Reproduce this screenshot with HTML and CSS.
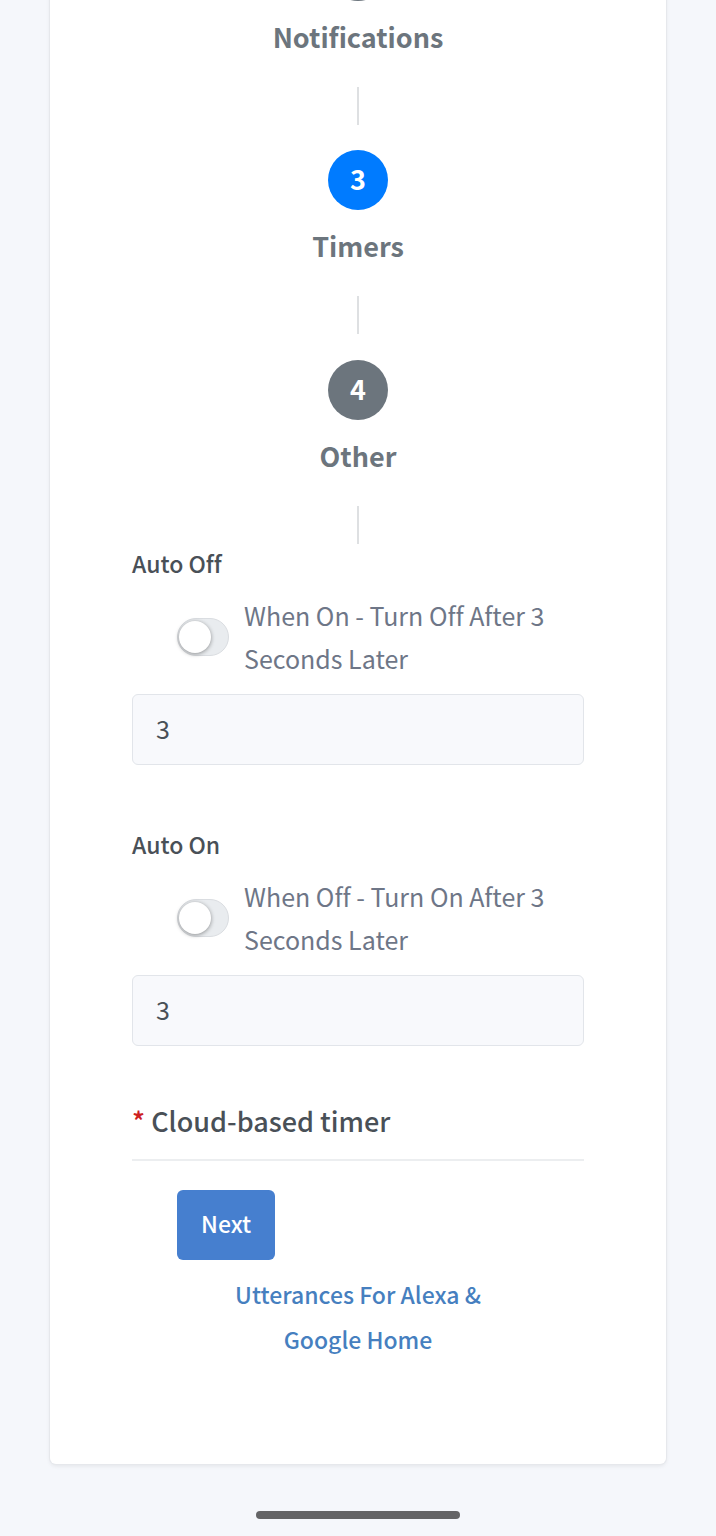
FILE: index.html
```html
<!DOCTYPE html>
<html lang="en">
<head>
  <meta charset="UTF-8" />
  <meta name="viewport" content="width=device-width, initial-scale=1.0"/>
  <title>Timers</title>
  <link rel="stylesheet" href="styles.css">
</head>
<body>

  <main class="card">
    <ol class="steps">
      <li class="step">
        <span class="step-number"></span>
        <span class="step-label">Notifications</span>
      </li>
      <li class="step">
        <span class="step-number active">3</span>
        <span class="step-label">Timers</span>
      </li>
      <li class="step">
        <span class="step-number">4</span>
        <span class="step-label">Other</span>
      </li>
    </ol>

    <form>
      <div class="timer">
        <label class="timer-title" for="autoOff">Auto Off</label>
        <label class="switch">
          <input type="checkbox" class="switch-input" />
          <span>When On - Turn Off After 3 Seconds Later</span>
        </label>
        <input type="text" inputmode="numeric" class="field" id="autoOff" value="3" />
      </div>

      <div class="timer">
        <label class="timer-title" for="autoOn">Auto On</label>
        <label class="switch">
          <input type="checkbox" class="switch-input" />
          <span>When Off - Turn On After 3 Seconds Later</span>
        </label>
        <input type="text" inputmode="numeric" class="field" id="autoOn" value="3" />
      </div>

      <p class="note"><span class="star">*</span> Cloud-based timer</p>

      <div class="actions">
        <button type="button" class="primary">Next</button>
        <a class="help" href="#">Utterances For Alexa &amp; Google Home</a>
      </div>
    </form>
  </main>

  <div class="home-bar"></div>

</body>
</html>
```
FILE: styles.css
```css
* { box-sizing: border-box; }

body {
  margin: 0;
  padding: 0 50px;
  background: #f5f7fb;
  color: #495057;
  font-family: "Noto Sans CJK SC", "Open Sans", sans-serif;
  font-size: 25px;
  font-variant-ligatures: none;
  overflow-x: hidden;
}

/* the list is scrolled up to the end of step 2's circle */
.card {
  margin-top: -59px;
  padding: 0 82px 102px;
  background: #fff;
  border-radius: 6px;
  box-shadow: 0 0 0 1px #e6e8ec, 0 2px 4px rgba(0,0,0,0.08);
}

.steps {
  list-style: none;
  margin: 0;
  padding: 0;
}

.step {
  display: flex;
  flex-direction: column;
  align-items: center;
  padding-bottom: 26px;
}

.step:first-child { padding-bottom: 25px; }
.step:last-child { padding-bottom: 0; }

.step::after {
  content: "";
  width: 2px;
  height: 38px;
  background: #dee0e2;
}

.step-number {
  width: 60px;
  height: 60px;
  border-radius: 50%;
  background: #6c757d;
  color: #fff;
  font-size: 27px;
  font-weight: 700;
  line-height: 58px;
  text-align: center;
}

.step-number.active { background: #007bff; }

.step-label {
  margin: 16px 0 30px;
  color: #6c757d;
  font-size: 27px;
  font-weight: 700;
  line-height: 40px;
}

.timer { margin-bottom: 60px; }

.timer-title {
  display: block;
  margin-bottom: 12px;
  font-size: 23px;
  font-weight: 500;
  line-height: 38px;
}

.switch {
  display: flex;
  align-items: center;
  gap: 15px;
  margin-bottom: 14px;
  padding-left: 45px;
  color: #6e7687;
  line-height: 43px;
  cursor: pointer;
}

.switch-input {
  appearance: none;
  flex: none;
  width: 52px;
  height: 38px;
  margin: 0;
  padding: 2px 1px;
  background: #e9ecef;
  border: 1px solid #dadde1;
  border-radius: 19px;
  cursor: pointer;
}

.switch-input::before {
  content: "";
  display: block;
  width: 32px;
  height: 32px;
  border-radius: 50%;
  background: #fff;
  box-shadow: 0 1px 4px rgba(0,0,0,0.4);
}

.switch-input:checked { background: #467fcf; }
.switch-input:checked::before { margin-left: 16px; }

.field {
  display: block;
  width: 100%;
  height: 71px;
  padding: 0 23px 3px;
  background: #f8f9fc;
  border: 1px solid #e2e5ea;
  border-radius: 6px;
  color: #495057;
  font-family: inherit;
  font-size: 25px;
}

.note {
  margin: 0;
  padding-bottom: 23px;
  border-bottom: 2px solid #eceef0;
  font-size: 27px;
  font-weight: 500;
  line-height: 30px;
}

.star { color: #cd201f; }

.actions {
  display: flex;
  flex-direction: column;
  align-items: flex-start;
  padding: 29px 45px 0;
}

.primary {
  height: 70px;
  padding: 0 24px 4px;
  background: #467fcf;
  border: none;
  border-radius: 6px;
  color: #fff;
  font-family: inherit;
  font-size: 23px;
  font-weight: 500;
  cursor: pointer;
}

.help {
  align-self: stretch;
  margin-top: 12px;
  padding: 0 24px;
  color: #467fbf;
  font-size: 23px;
  font-weight: 500;
  line-height: 45px;
  text-align: center;
  text-decoration: none;
}

.home-bar {
  width: 204px;
  height: 8px;
  margin: 47px auto 16px;
  border-radius: 4px;
  background: #646466;
}
```
